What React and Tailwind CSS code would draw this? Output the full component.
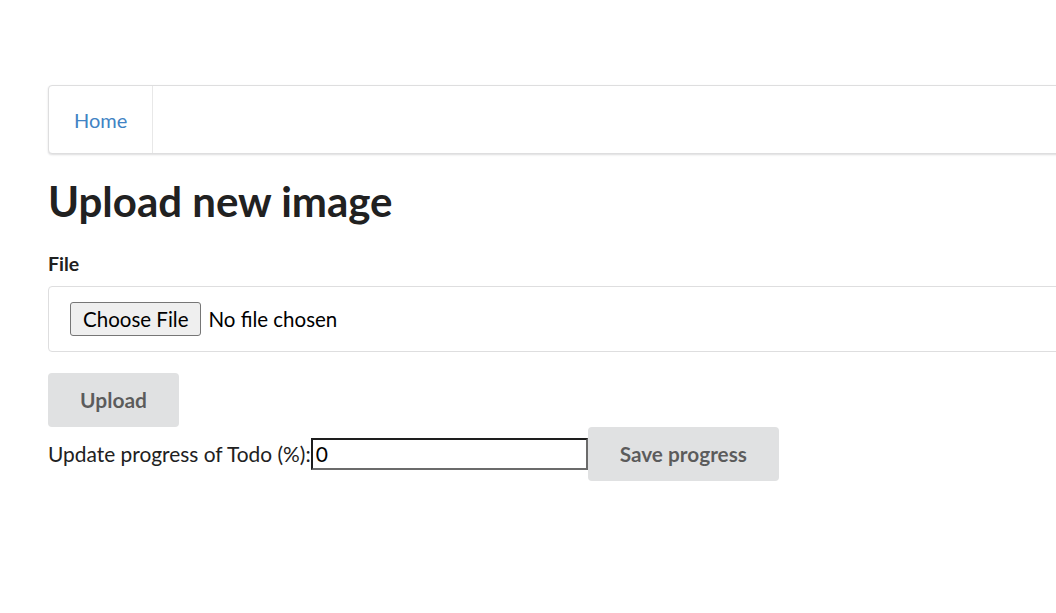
export default function App() {
  return (
    <div className="w-[1056px] h-[613px] overflow-hidden bg-white font-['Lato',sans-serif] text-[21px] text-[#212121]">
      <div className="ml-[48px] w-[1127px] pt-[85px]">
        {/* Menu */}
        <div className="flex h-[69px] rounded-[4px] border border-[#dededf] shadow-[0_1px_2px_0_rgba(34,36,38,0.15)] bg-white">
          <a className="flex items-center px-[25px] border-r border-[#e8e8e8] text-[#4183c4] text-[20px]">
            Home
          </a>
        </div>

        <h1 className="mt-[22px] text-[42px] leading-[1.2] font-bold text-[#212121]">Upload new image</h1>

        <form className="mt-[26px]">
          <label className="block text-[19.5px] font-bold leading-[1.2] text-[#212121]">File</label>
          <div className="mt-[10px] flex h-[66px] items-center rounded-[4px] border border-[#dededf] pl-[21px]">
            <span className="flex h-[34px] items-center rounded-[3px] border border-[#767676] bg-[#efefef] px-[12px] pt-[2px] text-[20.5px] text-black">
              Choose File
            </span>
            <span className="ml-[7px] pt-[2px] text-[20.5px] text-black">No file chosen</span>
          </div>

          <button
            type="button"
            className="mt-[21px] h-[54px] rounded-[4px] bg-[#e0e1e2] px-[32px] text-[21px] font-bold text-[rgba(0,0,0,0.6)]"
          >
            Upload
          </button>
        </form>

        <div className="flex items-center">
          <span className="text-[20.9px] text-[#212121]">Update progress of Todo (%):</span>
          <input
            defaultValue="0"
            className="h-[32px] w-[277px] border-2 border-t-[#1e1e1e] border-l-[#1e1e1e] border-r-[#6b6b6b] border-b-[#6b6b6b] px-[3px] text-[21px] text-black outline-none"
          />
          <button
            type="button"
            className="h-[54px] rounded-[4px] bg-[#e0e1e2] px-[32px] text-[20.8px] font-bold text-[rgba(0,0,0,0.6)]"
          >
            Save progress
          </button>
        </div>
      </div>
    </div>
  );
}
